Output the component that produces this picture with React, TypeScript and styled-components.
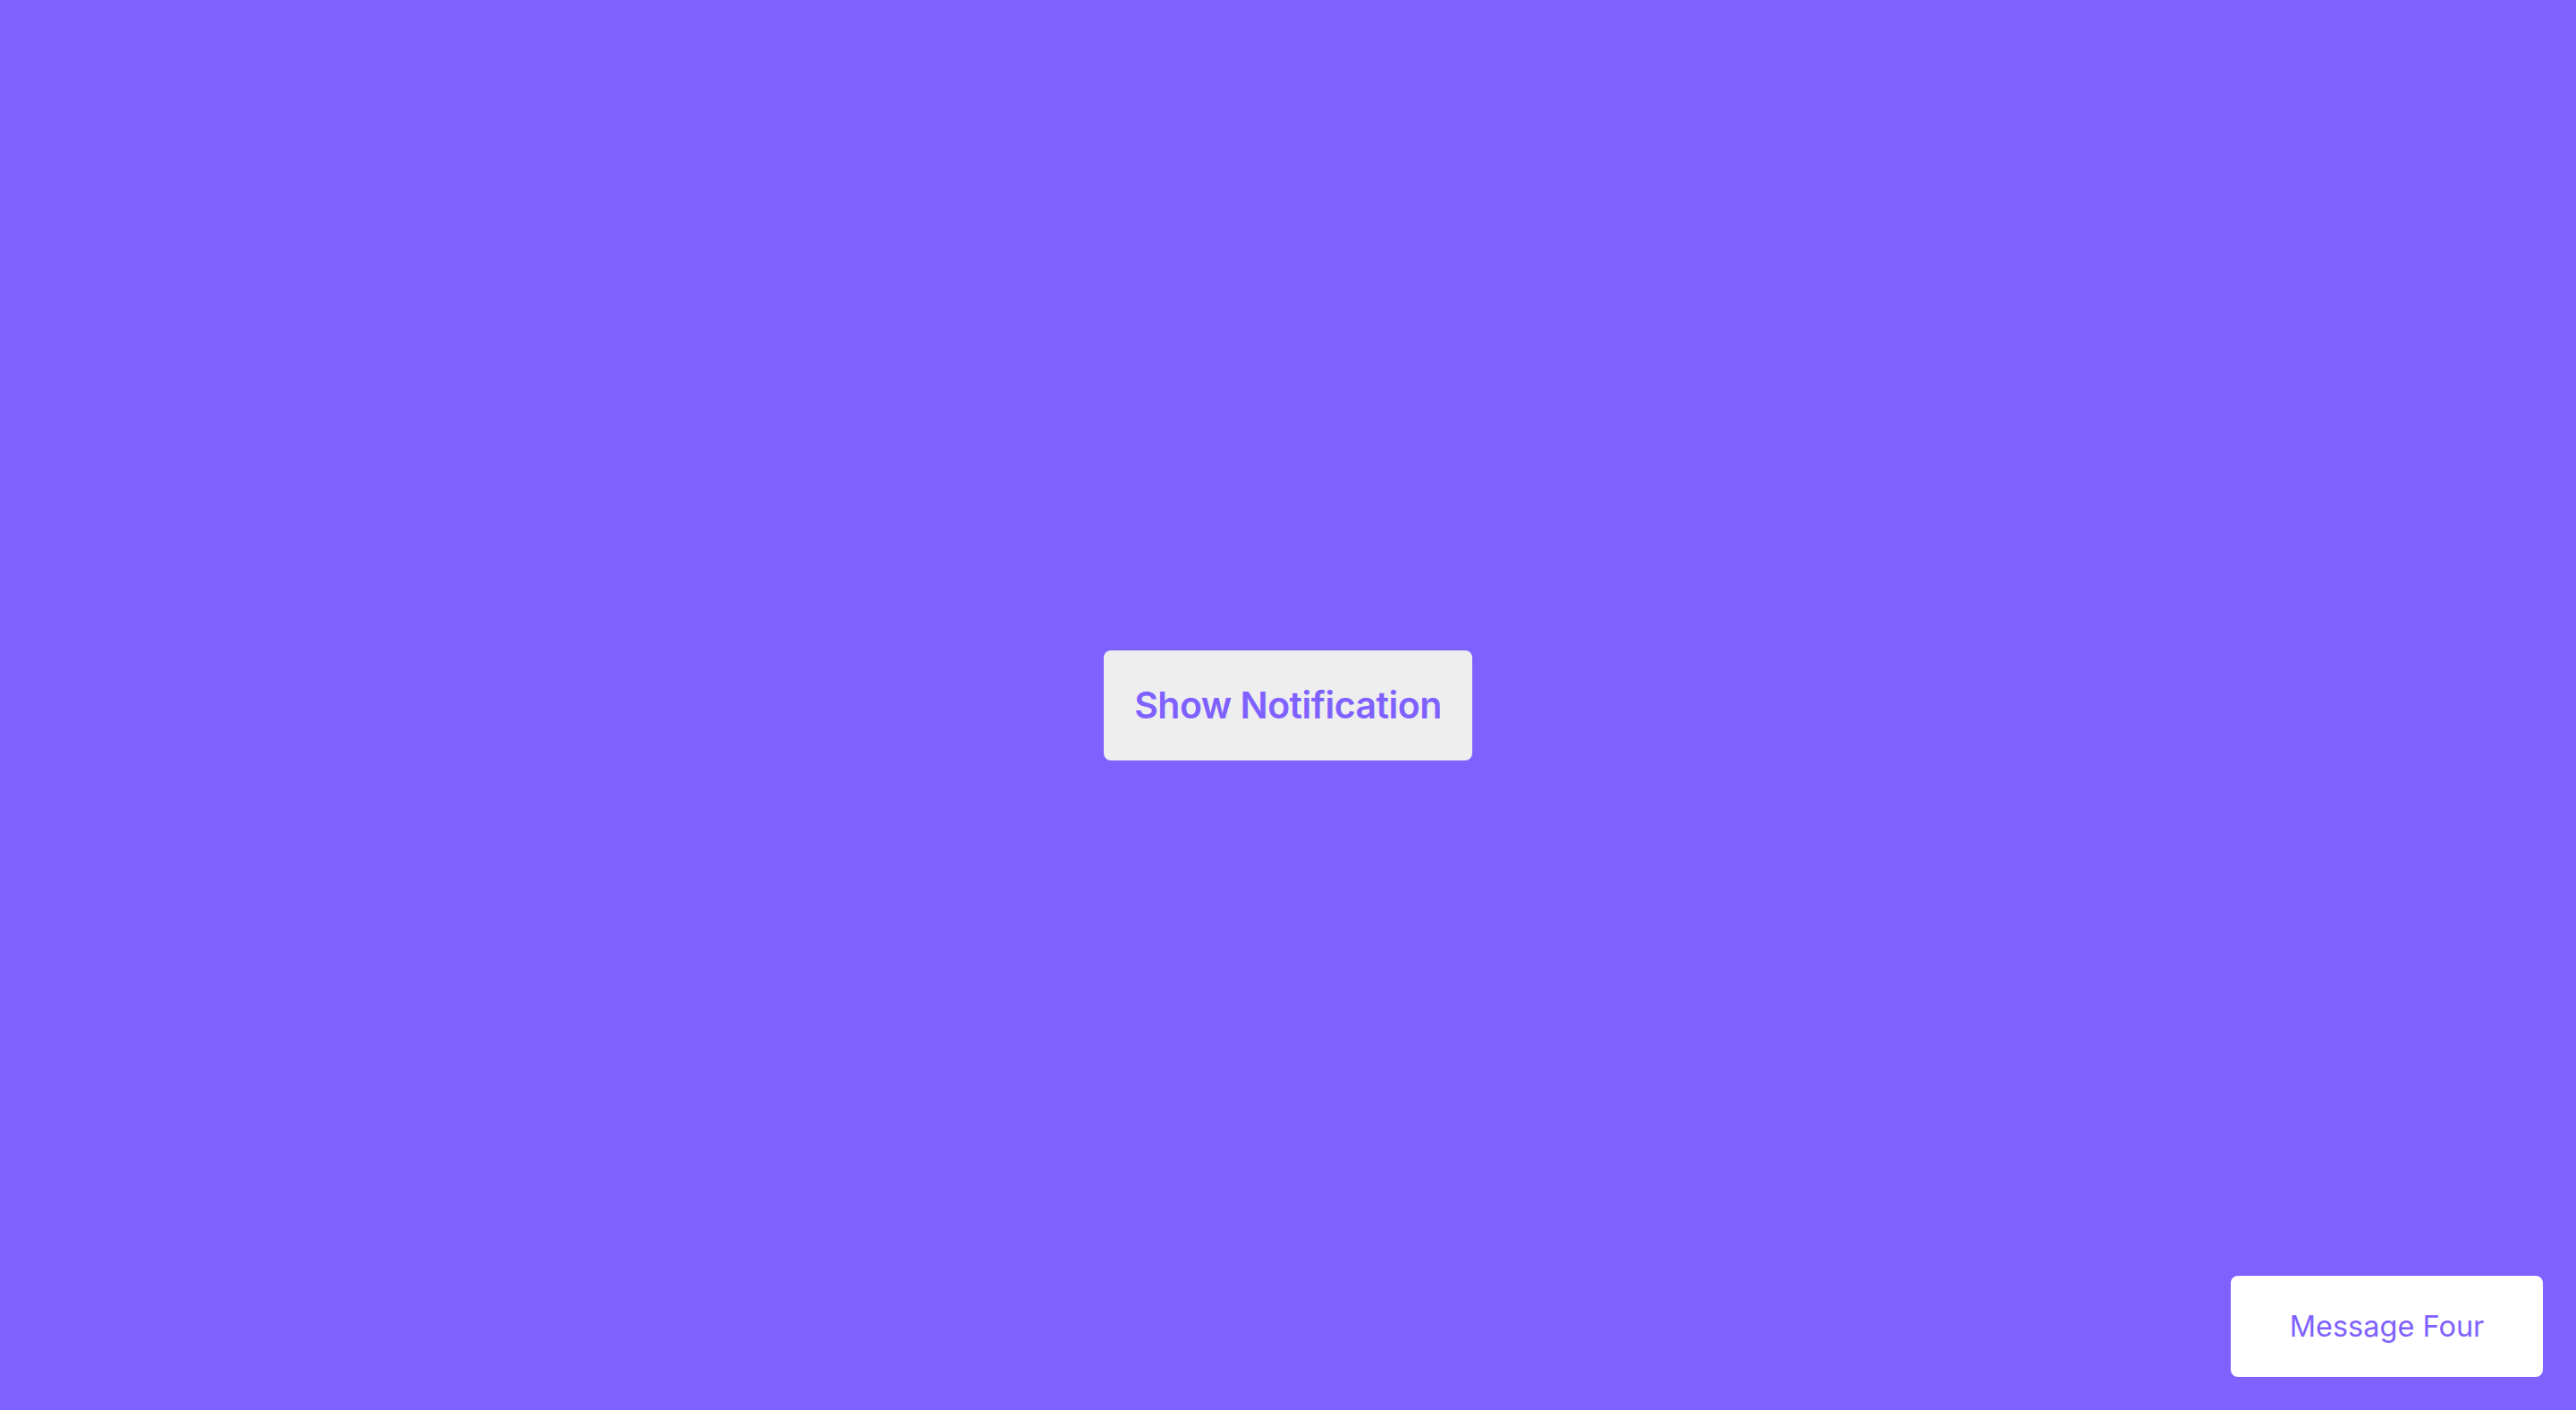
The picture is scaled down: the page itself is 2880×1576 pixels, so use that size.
import React from "react";
import styled, { createGlobalStyle } from "styled-components";

const GlobalStyle = createGlobalStyle`
  html, body {
    margin: 0;
    padding: 0;
  }
  body {
    background: #7f61ff;
    font-family: "Inter", "Liberation Sans", sans-serif;
  }
`;

const Page = styled.main`
  height: 100vh;
  display: flex;
  align-items: center;
  justify-content: center;
`;

const ShowButton = styled.button`
  width: 412px;
  height: 123px;
  display: flex;
  align-items: center;
  justify-content: center;
  background: #eeeeee;
  color: #7f61ff;
  border: none;
  border-radius: 8px;
  font-family: "Inter", "Liberation Sans", sans-serif;
  font-weight: 600;
  font-size: 41px;
  letter-spacing: -0.5px;
  cursor: pointer;
`;

const Toast = styled.div`
  position: fixed;
  right: 37px;
  bottom: 37px;
  width: 349px;
  height: 113px;
  display: flex;
  align-items: center;
  justify-content: center;
  background: #ffffff;
  color: #7f61ff;
  border-radius: 8px;
  font-family: "Inter", "Liberation Sans", sans-serif;
  font-weight: 400;
  font-size: 32.5px;
`;

export default function App() {
  return (
    <>
      <GlobalStyle />
      <Page>
        <ShowButton>Show Notification</ShowButton>
      </Page>
      <Toast>Message Four</Toast>
    </>
  );
}
